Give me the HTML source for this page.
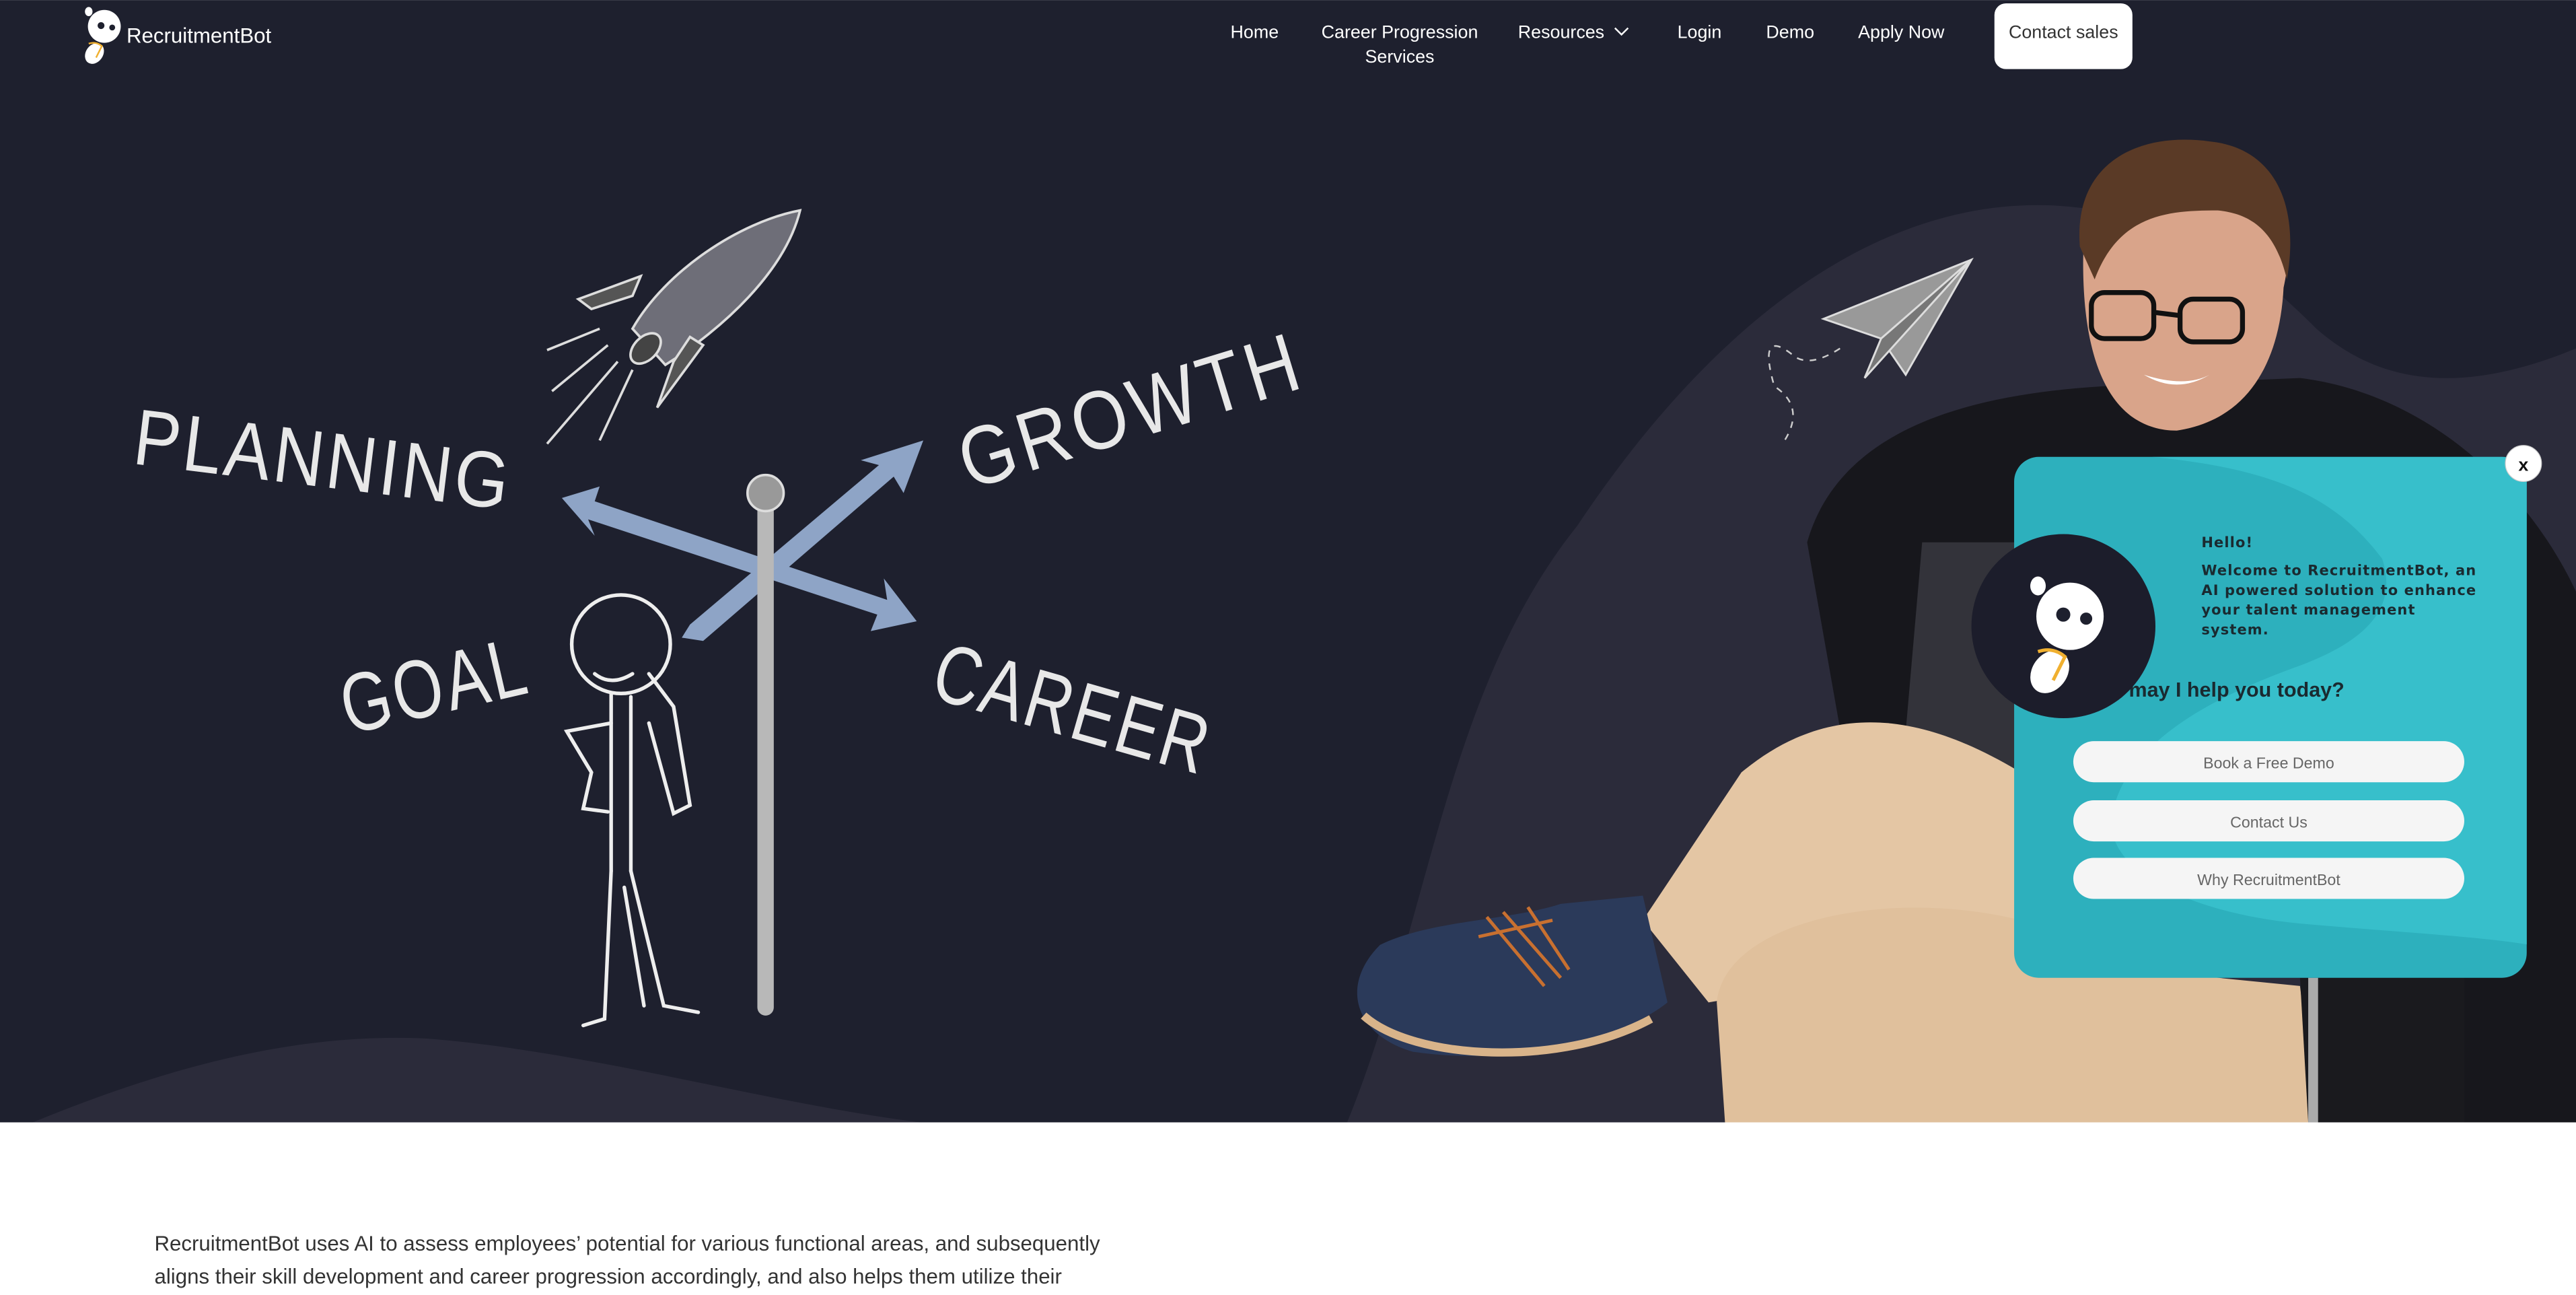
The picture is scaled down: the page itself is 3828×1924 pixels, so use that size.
<!DOCTYPE html>
<html><head><meta charset="utf-8"><style>
html,body{margin:0;padding:0;background:#fff;width:3828px;height:1924px;overflow:hidden}
svg{display:block}
</style></head><body>
<svg width="3828" height="1924" viewBox="0 0 1568 788" xmlns="http://www.w3.org/2000/svg" font-family="Liberation Sans, sans-serif">
<defs>
<g id="bot">
<circle cx="0" cy="0" r="10" fill="#fff"/>
<ellipse cx="-9.5" cy="-9" rx="2.3" ry="2.8" fill="#fff"/>
<circle cx="-2" cy="-0.5" r="2.1" fill="#1e202e"/>
<circle cx="4.8" cy="0.7" r="1.8" fill="#1e202e"/>
<ellipse cx="-6" cy="16.5" rx="5.2" ry="6.8" transform="rotate(35 -6 16.5)" fill="#fff"/>
<path d="M-9.5 10.5 Q-5 9 -1.5 12 L-5 19" stroke="#f0b030" stroke-width="1" fill="none"/>
</g>
</defs>
<rect x="0" y="0" width="1568" height="683" fill="#1e202e"/>
<path d="M820 683 C870 560 880 420 960 320 C1040 200 1140 120 1250 125 C1330 130 1370 160 1410 200 C1450 235 1500 240 1568 212 L1568 683 Z" fill="#2b2b3a"/>
<path d="M20 683 C100 650 180 628 260 632 C360 640 460 670 560 683 Z" fill="#2b2b3a"/>
<rect x="0" y="683" width="1568" height="105" fill="#fff"/>

<use href="#bot" transform="translate(63.5,16)"/>
<text x="77" y="26" font-size="12.8" fill="#fff">RecruitmentBot</text>
<g font-size="11" fill="#fff">
<text x="749" y="23">Home</text>
<text x="852" y="23" text-anchor="middle">Career Progression</text>
<text x="852" y="38" text-anchor="middle">Services</text>
<text x="924" y="23">Resources</text>
<path d="M983 17 L987 21 L991 17" stroke="#fff" stroke-width="1" fill="none"/>
<text x="1021" y="23">Login</text>
<text x="1075" y="23">Demo</text>
<text x="1131" y="23">Apply Now</text>
</g>
<rect x="1214" y="2" width="84" height="40" rx="7" fill="#fff"/>
<text x="1256" y="23" font-size="11" fill="#333" text-anchor="middle">Contact sales</text>

<g fill="#e8e8e8" font-size="46">
<text transform="translate(80,282) rotate(7) scale(0.92,1.05)" letter-spacing="2">PLANNING</text>
<text transform="translate(590,298) rotate(-17) scale(0.95,1.1)" letter-spacing="3">GROWTH</text>
<text transform="translate(212,447) rotate(-13) scale(0.85,1.1)" letter-spacing="2">GOAL</text>
<text transform="translate(565,424) rotate(16) scale(0.85,1.1)" letter-spacing="2">CAREER</text>
</g>
<g stroke="#ddd" stroke-width="1.5">
<path d="M487 128 C450 135 405 165 385 200 L405 222 C440 200 478 165 487 128 Z" fill="#6e6e78"/>
<path d="M390 168 L352 182 L360 188 L385 180 Z" fill="#555"/>
<path d="M420 205 L428 210 L400 248 L410 220 Z" fill="#555"/>
<ellipse cx="393" cy="212" rx="7" ry="11" transform="rotate(45 393 212)" fill="#444"/>
<path d="M365 200 L333 213 M370 210 L336 238 M376 220 L333 270 M385 225 L365 268" fill="none"/>
</g>
<g fill="#8ea4c6">
<path d="M342 303 L365 296 L362 305 L540 365 L538 352 L558 378 L530 384 L534 374 L358 316 L362 326 Z"/>
<path d="M415 388 L420 380 L535 283 L524 280 L562 268 L550 300 L544 290 L428 390 Z"/>
</g>
<rect x="461" y="300" width="10" height="318" rx="5" fill="#b8b8b8"/>
<circle cx="466" cy="300" r="11" fill="#999" stroke="#ddd" stroke-width="1.5"/>
<g stroke="#eee" stroke-width="2.2" fill="none" stroke-linecap="round">
<circle cx="378" cy="392" r="30"/>
<path d="M362 410 Q372 418 385 410"/>
<path d="M372 422 L372 530 M384 424 L384 530"/>
<path d="M372 440 L345 445 L360 470 L355 492 L370 494"/>
<path d="M395 410 L410 430 L420 490 L410 495 L395 440"/>
<path d="M372 530 L368 620 L355 624 M384 530 L404 612 L425 616 M380 540 L392 612"/>
</g>
<g stroke="#ddd" stroke-width="1.2" fill="#999">
<path d="M1110 194 L1200 158 L1160 228 L1145 206 Z"/>
<path d="M1145 206 L1135 230 L1200 158 Z" fill="#777"/>
</g>
<path d="M1120 212 Q1100 225 1090 215 Q1070 200 1080 235 Q1100 248 1085 270" stroke="#ccc" stroke-width="1" stroke-dasharray="4 4" fill="none"/>

<path d="M1100 330 C1120 260 1200 240 1280 235 L1400 230 C1480 240 1540 300 1568 360 L1568 683 L1420 683 L1400 520 L1130 500 Z" fill="#17171c"/>
<path d="M1170 330 L1260 330 L1260 560 L1150 560 Z" fill="#33333a"/>
<path d="M1268 160 C1268 110 1300 85 1340 88 C1385 90 1400 130 1390 175 C1388 215 1372 255 1325 262 C1290 262 1268 230 1268 160 Z" fill="#d9a48a"/>
<path d="M1266 150 C1262 100 1300 80 1345 86 C1385 90 1400 125 1392 170 C1385 140 1370 130 1350 128 C1320 128 1290 130 1275 170 Z" fill="#5a3a26"/>
<g stroke="#111" stroke-width="3" fill="none"><rect x="1273" y="178" width="38" height="28" rx="8"/><rect x="1327" y="182" width="38" height="26" rx="8"/><path d="M1311 190 L1327 192"/></g>
<path d="M1305 228 Q1325 240 1345 228 Q1330 236 1305 228 Z" fill="#fff"/>
<path d="M1000 560 L1060 470 C1120 420 1180 440 1230 470 L1240 560 C1200 580 1100 600 1040 610 Z" fill="#e4c6a4"/>
<path d="M1045 610 C1050 560 1150 540 1230 560 L1300 590 L1400 600 L1410 683 L1050 683 Z" fill="#e0c09c"/>
<path d="M1400 595 L1500 595 L1500 683 L1405 683 Z" fill="#1a1a1e"/>
<rect x="1405" y="595" width="6" height="88" fill="#aaa"/>
<path d="M950 550 L1000 545 L1015 610 C990 630 930 650 860 640 C825 630 815 600 840 575 C870 560 920 560 950 550 Z" fill="#2b3a5a"/>
<path d="M830 618 C860 645 950 650 1005 620" stroke="#d9b48a" stroke-width="5" fill="none"/>
<path d="M905 558 L940 600 M915 555 L950 595 M930 552 L955 590 M900 570 L945 560" stroke="#c87030" stroke-width="2" fill="none"/>

<clipPath id="pc"><rect x="1226" y="278" width="312" height="317" rx="15"/></clipPath>
<rect x="1226" y="278" width="312" height="317" rx="15" fill="#2db0bd"/>
<path clip-path="url(#pc)" d="M1310 278 C1380 285 1420 300 1450 340 C1460 370 1440 390 1400 405 C1330 430 1290 460 1285 500 C1285 530 1330 555 1400 562 C1470 568 1510 570 1540 575 L1540 278 Z" fill="#37bfcb"/>
<text x="1427" y="424" font-size="12.5" font-weight="bold" fill="#1a2a30" text-anchor="end">How may I help you today?</text>
<g font-family="DejaVu Sans, sans-serif" font-weight="bold" fill="#1a2a30" font-size="8.6" letter-spacing="0.45">
<text x="1340" y="333">Hello!</text>
<text x="1340" y="350">Welcome to RecruitmentBot, an</text>
<text x="1340" y="362">AI powered solution to enhance</text>
<text x="1340" y="374">your talent management</text>
<text x="1340" y="386">system.</text>
</g>
<circle cx="1256" cy="381" r="56" fill="#1c1d2b"/>
<use href="#bot" transform="translate(1260,375) scale(2.05)"/>
<circle cx="1536" cy="282" r="11" fill="#fff" stroke="#ccc" stroke-width="0.5"/>
<text x="1536" y="286.5" font-size="11" font-weight="bold" fill="#111" text-anchor="middle">x</text>
<g font-size="9.5" fill="#666" text-anchor="middle">
<rect x="1262" y="451" width="238" height="25" rx="12.5" fill="#f5f5f5"/>
<text x="1381" y="467.5">Book a Free Demo</text>
<rect x="1262" y="487" width="238" height="25" rx="12.5" fill="#f5f5f5"/>
<text x="1381" y="503.5">Contact Us</text>
<rect x="1262" y="522" width="238" height="25" rx="12.5" fill="#f5f5f5"/>
<text x="1381" y="538.5">Why RecruitmentBot</text>
</g>

<g font-size="12.8" fill="#333">
<text x="94" y="761">RecruitmentBot uses AI to assess employees’ potential for various functional areas, and subsequently</text>
<text x="94" y="781">aligns their skill development and career progression accordingly, and also helps them utilize their</text>
</g>
</svg>
</body></html>
